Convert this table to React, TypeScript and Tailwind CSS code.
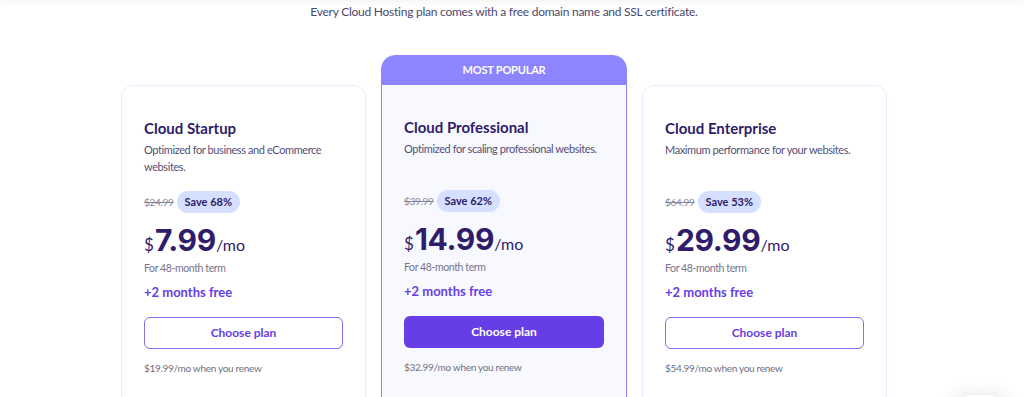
import React from 'react';

interface Plan {
  name: string;
  description: string;
  oldPrice: string;
  save: string;
  price: string;
  renew: string;
  popular?: boolean;
}

const plans: Plan[] = [
  {
    name: 'Cloud Startup',
    description: 'Optimized for business and eCommerce websites.',
    oldPrice: '$24.99',
    save: 'Save 68%',
    price: '7.99',
    renew: '$19.99/mo when you renew',
  },
  {
    name: 'Cloud Professional',
    description: 'Optimized for scaling professional websites.',
    oldPrice: '$39.99',
    save: 'Save 62%',
    price: '14.99',
    renew: '$32.99/mo when you renew',
    popular: true,
  },
  {
    name: 'Cloud Enterprise',
    description: 'Maximum performance for your websites.',
    oldPrice: '$64.99',
    save: 'Save 53%',
    price: '29.99',
    renew: '$54.99/mo when you renew',
  },
];

function PlanBody({ plan }: { plan: Plan }) {
  return (
    <div className="px-[22px] pt-[32px] pb-[40px]">
      <h3 className="text-[15px] leading-[20px] font-bold text-[#2f1c6a]">{plan.name}</h3>
      <p className="mt-[3px] min-h-[34px] text-[11px] leading-[17px] tracking-[-0.4px] text-[#544f75]">
        {plan.description}
      </p>

      <div className="mt-[16px] flex h-[22px] items-center gap-[3px]">
        <span className="text-[10px] tracking-[-0.3px] text-[#85849a] line-through">{plan.oldPrice}</span>
        <span className="flex h-[22px] items-center rounded-full bg-[#d5dfff] px-[8px] text-[11px] font-bold text-[#2f1c6a]">
          {plan.save}
        </span>
      </div>

      <div className="mt-[9px] flex h-[36px] items-baseline text-[#2f1c6a]">
        <span className="text-[17px] leading-[36px]">$</span>
        <span className="ml-[1px] font-['Inter',sans-serif] text-[30px] leading-[36px] font-bold tracking-[-0.3px]">
          {plan.price}
        </span>
        <span className="text-[16px] leading-[36px]">/mo</span>
      </div>

      <p className="mt-[3px] text-[10.5px] leading-[14px] tracking-[-0.4px] text-[#76748c]">For 48-month term</p>
      <p className="mt-[8px] text-[13px] leading-[18px] font-bold text-[#673de6]">+2 months free</p>

      <button
        className={
          plan.popular
            ? 'mt-[16px] flex h-[32px] w-full items-center justify-center rounded-[6px] bg-[#673de6] text-[12px] font-bold text-white'
            : 'mt-[16px] flex h-[32px] w-full items-center justify-center rounded-[6px] border-[1.5px] border-[#8c6cf0] bg-white text-[12px] font-bold text-[#673de6]'
        }
      >
        Choose plan
      </button>

      <p className="mt-[12px] text-[10px] leading-[14px] tracking-[-0.3px] text-[#6d7081]">{plan.renew}</p>
    </div>
  );
}

export default function App() {
  return (
    <div className="relative h-[397px] w-[1024px] overflow-hidden bg-white font-['Lato',sans-serif]">
      {/* header shadow from the nav bar above */}
      <div className="absolute left-0 top-[-20px] h-[20px] w-full bg-white shadow-[0_1px_6px_rgba(0,0,0,0.06)]" />

      <div className="w-[1008px]">
        <p className="pt-[4px] text-center text-[12px] leading-[16px] tracking-[-0.25px] text-[#4b4870]">
          Every Cloud Hosting plan comes with a free domain name and SSL certificate.
        </p>

        <div className="mt-[35px] flex justify-center gap-[15px]">
          {plans.map((plan) =>
            plan.popular ? (
              <div key={plan.name} className="w-[246px] rounded-t-[14px] border-[1.5px] border-[#8c85ff] bg-[#f8f9ff]">
                <div className="flex h-[29px] items-center justify-center rounded-t-[12px] bg-[#8c85ff] text-[11px] font-bold tracking-[-0.2px] text-white">
                  MOST POPULAR
                </div>
                <PlanBody plan={plan} />
              </div>
            ) : (
              <div key={plan.name} className="mt-[30px] w-[245px] rounded-t-[12px] border border-[#eaecfd] bg-white">
                <PlanBody plan={plan} />
              </div>
            )
          )}
        </div>
      </div>

      {/* floating widget just below the fold */}
      <div className="absolute bottom-[-58px] right-[8px] h-[60px] w-[72px] rounded-full bg-white shadow-[0_0_18px_rgba(0,0,0,0.12)]" />
    </div>
  );
}
